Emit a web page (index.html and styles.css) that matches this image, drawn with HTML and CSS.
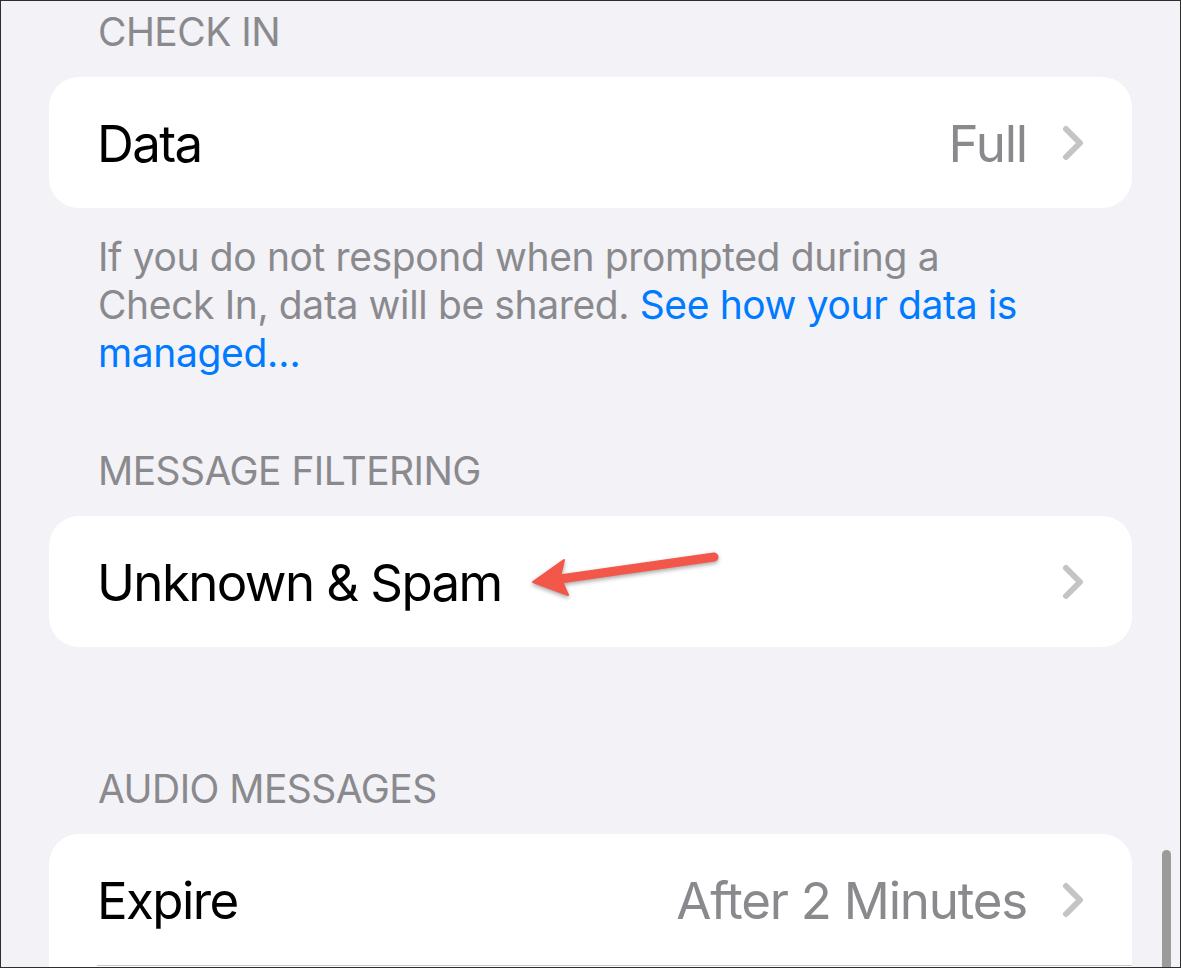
FILE: index.html
```html
<!DOCTYPE html>
<html lang="en">
<head>
  <meta charset="UTF-8" />
  <meta name="viewport" content="width=device-width, initial-scale=1.0"/>
  <title>Messages Settings</title>
  <link rel="stylesheet" href="styles.css">
</head>
<body>
  <div class="screen">

    <!-- Check In -->
    <div class="group-title first">CHECK IN</div>
    <div class="card">
      <div class="row">
        <span class="label">Data</span>
        <span class="value">Full</span>
        <svg class="chevron" viewBox="0 0 24 36"><path d="M4 4 L18 18 L4 32"/></svg>
      </div>
    </div>
    <p class="footer">
      If you do not respond when prompted during a<br>
      Check In, data will be shared. <a href="#">See how your data is<br>managed…</a>
    </p>

    <!-- Message Filtering -->
    <div class="group-title">MESSAGE FILTERING</div>
    <div class="card">
      <div class="row">
        <span class="label">Unknown &amp; Spam</span>
        <svg class="chevron" viewBox="0 0 24 36"><path d="M4 4 L18 18 L4 32"/></svg>
      </div>
    </div>

    <!-- Audio Messages -->
    <div class="group-title audio">AUDIO MESSAGES</div>
    <div class="card">
      <div class="row">
        <span class="label">Expire</span>
        <span class="value">After 2 Minutes</span>
        <svg class="chevron" viewBox="0 0 24 36"><path d="M4 4 L18 18 L4 32"/></svg>
      </div>
      <div class="separator"></div>
      <div class="row"></div>
    </div>

    <!-- annotation arrow -->
    <svg class="arrow" viewBox="0 0 200 60" width="200" height="60">
      <line x1="184" y1="10" x2="30" y2="32" />
      <polygon points="3,35 34,13 30,30 38,48" />
    </svg>

    <div class="scrollbar"></div>
  </div>
</body>
</html>
```

FILE: styles.css
```css
body {
  margin: 0;
  padding: 0;
  font-family: Inter, "Liberation Sans", Arial, sans-serif;
}

.screen {
  position: relative;
  width: 1181px;
  height: 968px;
  box-sizing: border-box;
  border: 1px solid #2e2e2e;
  background-color: #f2f2f7;
  padding: 0 48px;
  overflow: hidden;
}

.group-title {
  font-size: 39px;
  line-height: 48px;
  color: #8a8a8e;
  padding-left: 49px;
  margin: 70px 0 21px;
  letter-spacing: -0.55px;
}

.group-title.first {
  margin-top: 7px;
}

.group-title.audio {
  margin-top: 118px;
}

.card {
  background-color: #fff;
  border-radius: 30px;
}

.row {
  display: flex;
  align-items: center;
  height: 131px;
  padding: 2px 46px 0 48px;
  box-sizing: border-box;
  font-size: 51px;
}

.label {
  flex: 1;
  color: #000;
  letter-spacing: -1.6px;
}

.value {
  color: #8a8a8e;
  margin-right: 35px;
  letter-spacing: -1.2px;
}

.chevron {
  width: 24px;
  height: 36px;
  margin-top: -2px;
}

.chevron path {
  fill: none;
  stroke: #c4c4c7;
  stroke-width: 6;
  stroke-linecap: round;
  stroke-linejoin: round;
}

.separator {
  height: 1px;
  margin-left: 48px;
  background-color: #c8c8cc;
}

.footer {
  margin: 25px 0 0;
  padding-left: 49px;
  font-size: 39px;
  line-height: 48px;
  color: #8a8a8e;
  letter-spacing: -0.38px;
}

.footer a {
  color: #007aff;
  text-decoration: none;
}

/* overlays */
.arrow {
  position: absolute;
  left: 529px;
  top: 546px;
  overflow: visible;
  filter: drop-shadow(0 2px 2px rgba(0, 0, 0, 0.35));
}

.arrow line {
  stroke: #f2574a;
  stroke-width: 9;
  stroke-linecap: round;
}

.arrow polygon {
  fill: #f2574a;
  stroke: #f2574a;
  stroke-width: 2;
  stroke-linejoin: round;
}

.scrollbar {
  position: absolute;
  left: 1161px;
  top: 849px;
  width: 9px;
  height: 140px;
  border-radius: 5px;
  background-color: #9b9b9b;
}
```
